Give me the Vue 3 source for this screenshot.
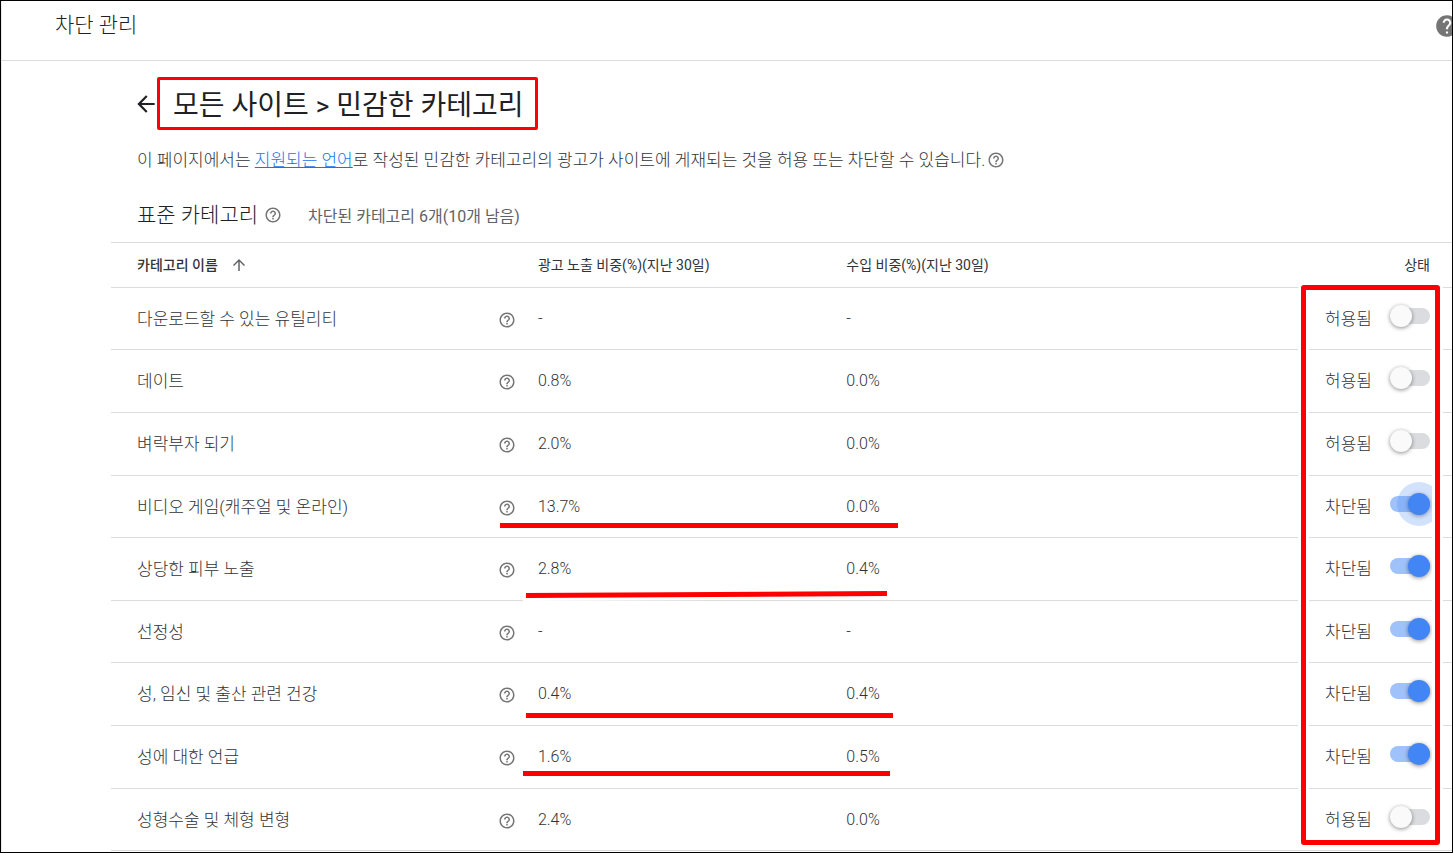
<template>
  <div class="page">
    <header class="topbar">
      <span class="topbar-title">차단 관리</span>
      <button class="icon-btn topbar-help" aria-label="도움말">
        <svg viewBox="0 0 24 24" width="26" height="26">
          <path d="M12 2C6.48 2 2 6.48 2 12s4.48 10 10 10 10-4.48 10-10S17.52 2 12 2zm1 17h-2v-2h2v2zm2.07-7.75l-.9.92C13.45 12.9 13 13.5 13 15h-2v-.5c0-1.1.45-2.1 1.17-2.83l1.24-1.26c.37-.36.59-.86.59-1.41 0-1.1-.9-2-2-2s-2 .9-2 2H8c0-2.21 1.79-4 4-4s4 1.79 4 4c0 .88-.36 1.68-.93 2.25z" />
        </svg>
      </button>
    </header>

    <main class="content">
      <div class="heading">
        <button class="icon-btn back" aria-label="뒤로">
          <svg viewBox="0 0 24 24" width="26" height="26">
            <path d="M20 11H7.83l5.59-5.59L12 4l-8 8 8 8 1.41-1.41L7.83 13H20v-2z" />
          </svg>
        </button>
        <h1>모든 사이트 <span class="gt">&gt;</span> 민감한 카테고리</h1>
      </div>

      <p class="intro">
        <span>이 페이지에서는 <a href="#">지원되는 언어</a>로 작성된 민감한 카테고리의 광고가 사이트에 게재되는 것을 허용 또는 차단할 수 있습니다.</span>
        <button class="icon-btn" aria-label="도움말">
          <svg viewBox="0 0 24 24" width="18" height="18"><path :d="helpIcon" /></svg>
        </button>
      </p>

      <div class="section-head">
        <h2>표준 카테고리</h2>
        <button class="icon-btn" aria-label="도움말">
          <svg viewBox="0 0 24 24" width="18" height="18"><path :d="helpIcon" /></svg>
        </button>
        <span class="count">차단된 카테고리 {{ blockedCount }}개({{ limit - blockedCount }}개 남음)</span>
      </div>

      <div class="table-wrap">
        <table>
          <colgroup>
            <col class="col-name">
            <col class="col-help">
            <col class="col-share">
            <col>
            <col class="col-status">
          </colgroup>
          <thead>
            <tr>
              <th class="name sorted">
                <span class="sort">
                  카테고리 이름
                  <svg viewBox="0 0 24 24" width="18" height="18">
                    <path d="M4 12l1.41 1.41L11 7.83V20h2V7.83l5.58 5.59L20 12l-8-8-8 8z" />
                  </svg>
                </span>
              </th>
              <th></th>
              <th>광고 노출 비중(%)(지난 30일)</th>
              <th>수입 비중(%)(지난 30일)</th>
              <th class="status-head">상태</th>
            </tr>
          </thead>
          <tbody>
            <tr v-for="(cat, i) in categories" :key="cat.name">
              <td class="name">{{ cat.name }}</td>
              <td>
                <button class="icon-btn row-help" aria-label="도움말">
                  <svg viewBox="0 0 24 24" width="18" height="18"><path :d="helpIcon" /></svg>
                </button>
              </td>
              <td class="num">{{ cat.impressions }}</td>
              <td class="num">{{ cat.revenue }}</td>
              <td>
                <div class="status">
                  <label :for="'cat-' + i">{{ cat.blocked ? '차단됨' : '허용됨' }}</label>
                  <input
                    :id="'cat-' + i"
                    v-model="cat.blocked"
                    type="checkbox"
                    class="toggle"
                    :class="{ ripple: i === active }"
                    @change="active = i"
                  >
                </div>
              </td>
            </tr>
          </tbody>
        </table>

        <div class="mark mark-games"></div>
        <div class="mark mark-skin"></div>
        <div class="mark mark-health"></div>
        <div class="mark mark-reference"></div>
        <div class="mark-box"></div>
      </div>
    </main>
  </div>
</template>

<script setup>
import { ref, computed } from 'vue'

const helpIcon = 'M11 18h2v-2h-2v2zm1-16C6.48 2 2 6.48 2 12s4.48 10 10 10 10-4.48 10-10S17.52 2 12 2zm0 18c-4.41 0-8-3.59-8-8s3.59-8 8-8 8 3.59 8 8-3.59 8-8 8zm0-14c-2.21 0-4 1.79-4 4h2c0-1.1.9-2 2-2s2 .9 2 2c0 2-3 1.75-3 5h2c0-2.25 3-2.5 3-5 0-2.21-1.79-4-4-4z'

const limit = 16
// one more blocked category sits further down the list
const blockedBelow = 1
const active = ref(3)

const categories = ref([
  { name: '다운로드할 수 있는 유틸리티', impressions: '-', revenue: '-', blocked: false },
  { name: '데이트', impressions: '0.8%', revenue: '0.0%', blocked: false },
  { name: '벼락부자 되기', impressions: '2.0%', revenue: '0.0%', blocked: false },
  { name: '비디오 게임(캐주얼 및 온라인)', impressions: '13.7%', revenue: '0.0%', blocked: true },
  { name: '상당한 피부 노출', impressions: '2.8%', revenue: '0.4%', blocked: true },
  { name: '선정성', impressions: '-', revenue: '-', blocked: true },
  { name: '성, 임신 및 출산 관련 건강', impressions: '0.4%', revenue: '0.4%', blocked: true },
  { name: '성에 대한 언급', impressions: '1.6%', revenue: '0.5%', blocked: true },
  { name: '성형수술 및 체형 변형', impressions: '2.4%', revenue: '0.0%', blocked: false },
])

const blockedCount = computed(() => categories.value.filter(c => c.blocked).length + blockedBelow)
</script>

<style>
body {
  margin: 0;
  background: #fff;
}
</style>

<style scoped>
.page {
  box-sizing: border-box;
  min-height: 100vh;
  border: 1px solid #000;
  overflow: hidden;
  color: #303337;
  font-family: Roboto, "Noto Sans CJK KR", sans-serif;
  font-size: 17px;
  font-weight: 300;
}
.topbar {
  box-sizing: border-box;
  height: 60px;
  padding-left: 53px;
  display: flex;
  align-items: center;
  justify-content: space-between;
  border-bottom: 1px solid #dadce0;
  border-left: 1px solid #e8eaed;
}
.topbar-title {
  padding-bottom: 16px;
  color: #202124;
  font-size: 21px;
}
.topbar-help {
  margin: 0 -8px 10px 0;
  fill: #5f6368;
}
.icon-btn {
  flex: none;
  display: flex;
  padding: 0;
  border: 0;
  background: none;
  fill: #757575;
  cursor: pointer;
}
.content {
  padding: 16px 0 0 109px;
  border-left: 1px solid #e8eaed;
}
.heading {
  display: flex;
  align-items: center;
  padding-left: 22px;
}
.back {
  margin-right: -2px;
  fill: #202124;
}
h1 {
  box-sizing: border-box;
  height: 53px;
  margin: 0;
  padding: 2px 11px 0 13px;
  border: 3px solid #f00;
  border-radius: 2px;
  color: #202124;
  font-size: 28px;
  font-weight: 400;
  line-height: 48px;
  white-space: nowrap;
}
.gt {
  font-size: 26px;
}
.intro {
  display: flex;
  align-items: center;
  gap: 2px;
  margin: 18px 0 0;
  padding-left: 26px;
  line-height: 24px;
  white-space: nowrap;
}
.intro a {
  color: #1a73e8;
}
.section-head {
  display: flex;
  align-items: center;
  height: 24px;
  margin: 31px 0 15px;
  padding-left: 26px;
}
h2 {
  margin: 0 6px 0 0;
  color: #202124;
  font-size: 21px;
  font-weight: 300;
  line-height: 22px;
}
.count {
  margin-left: 26px;
  color: #5f6368;
  font-size: 16px;
  font-weight: 400;
}
.table-wrap {
  position: relative;
}
table {
  width: 100%;
  table-layout: fixed;
  border-collapse: separate;
  border-spacing: 0;
  border-top: 1px solid #dadce0;
}
.col-name {
  width: 29%;
}
.col-help {
  width: 38px;
}
.col-share {
  width: 23%;
}
.col-status {
  width: 180px;
}
th,
td {
  padding: 0;
  border-bottom: 1px solid #dadce0;
  text-align: left;
  vertical-align: middle;
  line-height: 24px;
  white-space: nowrap;
}
th {
  box-sizing: border-box;
  height: 45px;
  font-size: 14px;
  font-weight: 400;
}
td {
  box-sizing: border-box;
  height: 63px;
}
tr:nth-child(5n + 1) td,
tr:nth-child(5n + 4) td {
  height: 62px;
}
.name {
  padding-left: 26px;
}
th.sorted {
  font-weight: 500;
}
.sort {
  display: flex;
  align-items: center;
  gap: 12px;
}
.sort svg {
  fill: #5f6368;
}
th.status-head {
  padding-right: 22px;
  text-align: right;
}
.row-help {
  margin: 2px 0 0 -2px;
}
.num {
  font-size: 16px;
}
.status {
  display: flex;
  align-items: center;
  justify-content: flex-end;
  gap: 18px;
  padding-right: 22px;
}
.toggle {
  appearance: none;
  position: relative;
  width: 40px;
  height: 16px;
  margin: 0 0 6px;
  border-radius: 8px;
  background: #dadce0;
  cursor: pointer;
}
.toggle::before {
  content: "";
  position: absolute;
  top: -3px;
  left: 0;
  width: 22px;
  height: 22px;
  border-radius: 50%;
  background: #fafafa;
  box-shadow: 0 1px 4px rgba(0, 0, 0, 0.45);
}
.toggle:checked {
  background: #a0c2fa;
}
.toggle:checked::before {
  left: 18px;
  background: #4285f4;
}
.toggle.ripple::after {
  content: "";
  position: absolute;
  top: -14px;
  left: 7px;
  width: 44px;
  height: 44px;
  border-radius: 50%;
  background: rgba(66, 133, 244, 0.24);
}

/* red pen marks over the table */
.mark {
  position: absolute;
  left: 415px;
  width: 367px;
  height: 5px;
  background: #f00;
}
.mark-games {
  top: 281px;
  left: 389px;
  width: 398px;
}
.mark-skin {
  top: 350px;
  width: 361px;
  box-shadow: 0 0 0 3px #fff;
  transform: rotate(-0.3deg);
}
.mark-health {
  top: 471px;
}
.mark-reference {
  top: 529px;
  left: 412px;
}
.mark-box {
  position: absolute;
  top: 43px;
  right: 12px;
  bottom: 6px;
  width: 129px;
  border: 5px solid #f00;
  border-radius: 3px;
  box-shadow: 0 0 0 3px #fff, inset 0 0 0 3px #fff;
  pointer-events: none;
}
</style>
